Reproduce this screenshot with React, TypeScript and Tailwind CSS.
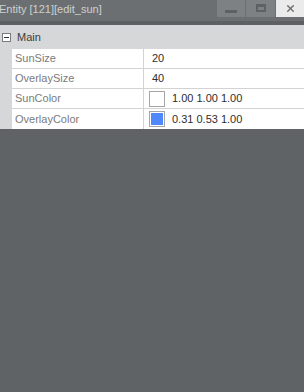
import { X } from 'lucide-react'

type Row = {
  name: string
  value: string
  swatch?: string
}

const rows: Row[] = [
  { name: 'SunSize', value: '20' },
  { name: 'OverlaySize', value: '40' },
  { name: 'SunColor', value: '1.00 1.00 1.00', swatch: '#ffffff' },
  { name: 'OverlayColor', value: '0.31 0.53 1.00', swatch: '#4f87ff' },
]

export default function App() {
  return (
    <div
      className="flex h-[392px] w-[304px] flex-col overflow-hidden bg-[#5f6366]"
      style={{ fontFamily: '"Liberation Sans", Arial, sans-serif' }}
    >
      {/* title bar */}
      <div className="flex h-[21px] shrink-0 items-start justify-between bg-[#6c6f71]">
        <span className="-ml-[1px] pt-[3px] text-[11px] leading-[13px] whitespace-nowrap text-[#cdcfd0]">
          Entity [121][edit_sun]
        </span>
        <div className="flex h-[17px] gap-[1px]">
          <button type="button" className="flex h-full w-[28px] items-start justify-center bg-[#7e8183] pt-[10px]">
            <span className="h-[3px] w-[12px] bg-[#5e6163]" />
          </button>
          <button type="button" className="flex h-full w-[29px] items-start justify-center bg-[#7e8183] pt-[4px]">
            <span className="h-[8px] w-[10px] border-2 border-t-[3px] border-[#5e6163]" />
          </button>
          <button type="button" className="flex h-full w-[28px] items-start justify-center bg-[#ebebeb] pt-[3px]">
            <X size={11} strokeWidth={3.2} className="text-[#6d6f71]" />
          </button>
        </div>
      </div>
      <div className="h-[4px] shrink-0 bg-[#5c6063]" />

      {/* property grid */}
      <div className="shrink-0 bg-[#d6d7d8]">
        <div className="flex h-[24px] items-center gap-[6px] pl-[2px]">
          <span className="flex h-[9px] w-[9px] items-center justify-center border border-[#7c7c7c] bg-white">
            <span className="h-[1px] w-[5px] bg-[#333]" />
          </span>
          <span className="text-[11px] text-[#3c3c3c]">Main</span>
        </div>
        <div className="pl-[12px]">
          {rows.map((r) => (
            <div key={r.name} className="grid h-[20px] grid-cols-[132px_1fr] border-b border-[#d3d3d3] bg-white text-[11px] last:border-b-0">
              <div className="flex items-center border-r border-[#d3d3d3] pl-[3px] text-[#7b7b7b]">{r.name}</div>
              <div className="flex items-center pl-[5px] text-[#2e2e2e]">
                {r.swatch ? (
                  <>
                    <span className="mr-[7px] h-[16px] w-[16px] shrink-0 border border-[#a5a5a5] bg-white p-[1px]">
                      <span className="block h-full w-full" style={{ backgroundColor: r.swatch }} />
                    </span>
                    {r.value}
                  </>
                ) : (
                  <span className="pl-[3px]">{r.value}</span>
                )}
              </div>
            </div>
          ))}
        </div>
      </div>
    </div>
  )
}
